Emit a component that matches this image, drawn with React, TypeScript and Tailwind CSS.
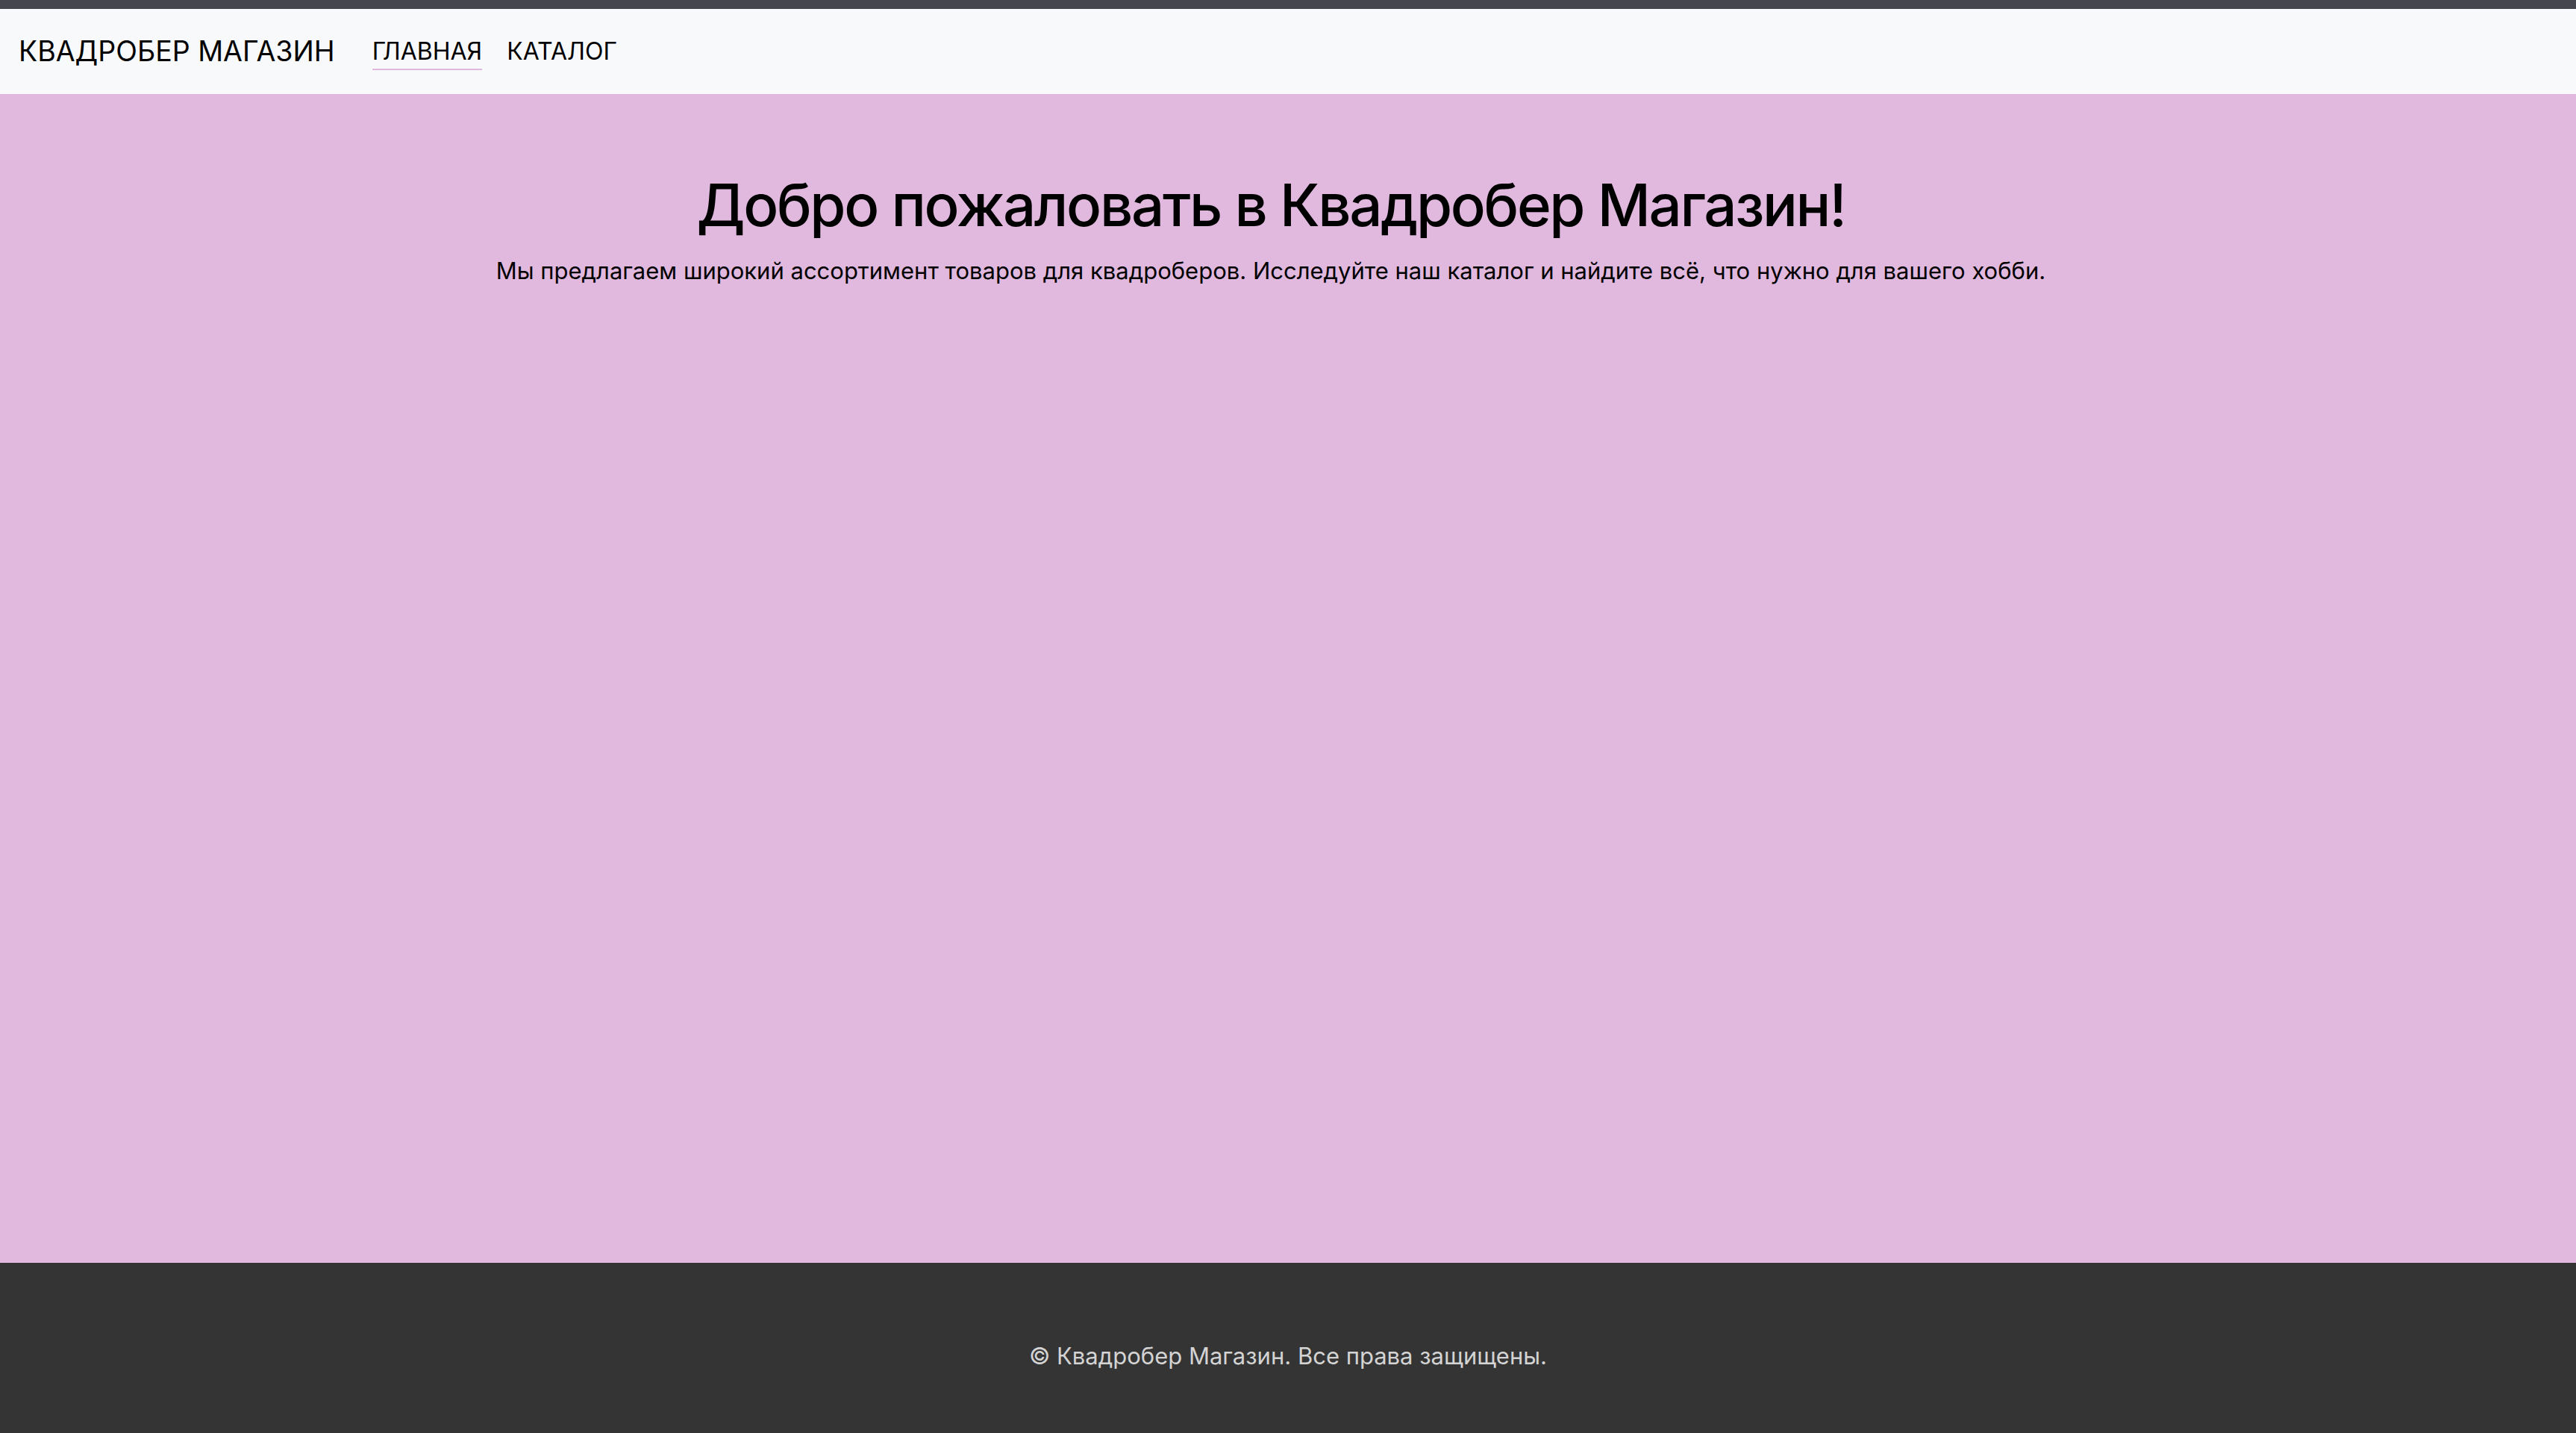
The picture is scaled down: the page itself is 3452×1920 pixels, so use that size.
export default function App() {
  return (
    <div className="flex min-h-screen flex-col font-['Inter',sans-serif]">
      <div className="h-[12px] bg-[#46464f]" />
      <nav className="flex h-[114px] items-center bg-[#f8f9fa] pl-[25px]">
        <span className="text-[37.5px] leading-none text-black">
          КВАДРОБЕР МАГАЗИН
        </span>
        <div className="ml-[50px] flex items-center gap-[33px] text-[32px] leading-none text-black">
          <span className="pt-[9px] pb-[7px] border-b-[2px] border-[#e0b7de]">ГЛАВНАЯ</span>
          <span className="pt-[9px] pb-[7px] border-b-[2px] border-transparent">КАТАЛОГ</span>
        </div>
      </nav>
      <main className="flex flex-1 flex-col items-center bg-[#e1b8de] pr-[46px] pt-[102px] text-black">
        <h1 className="text-[78px] font-medium leading-[1.2] tracking-[-0.03em]">Добро пожаловать в Квадробер Магазин!</h1>
        <p className="mt-[18px] text-[31px] leading-[1.5]">
          Мы предлагаем широкий ассортимент товаров для квадроберов. Исследуйте наш каталог и найдите всё, что нужно для вашего хобби.
        </p>
      </main>
      <footer className="flex h-[228px] items-center justify-center bg-[#343434] pt-[22px] text-[31px] text-[#d3d3d3]">
        © Квадробер Магазин. Все права защищены.
      </footer>
    </div>
  );
}
